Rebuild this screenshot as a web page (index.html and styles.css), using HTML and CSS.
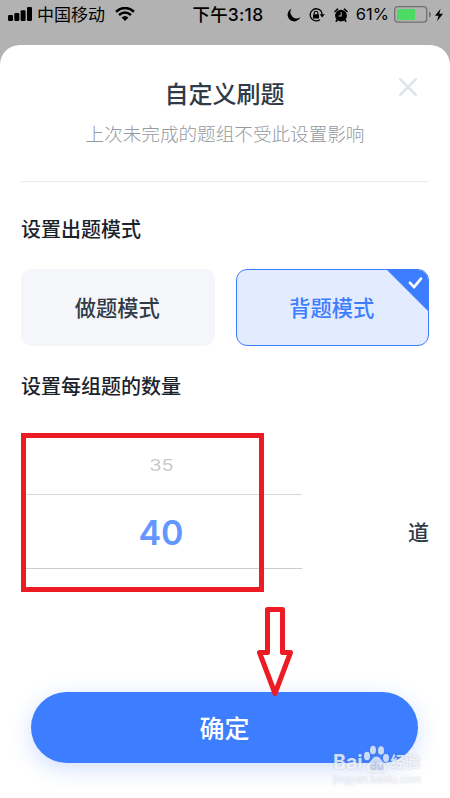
FILE: index.html
```
<!DOCTYPE html>
<html lang="zh-CN">
<head>
  <meta charset="UTF-8" />
  <meta name="viewport" content="width=device-width, initial-scale=1" />
  <title>自定义刷题</title>
  <link rel="stylesheet" href="styles.css">
</head>
<body>
  <!-- Status bar -->
  <header class="status-bar">
    <div class="status-left">
      <svg width="24" height="14" viewBox="0 0 24 14">
        <rect x="0" y="8" width="5" height="6" rx="1.2" />
        <rect x="6.3" y="6" width="5" height="8" rx="1.2" />
        <rect x="12.6" y="3.3" width="5" height="10.7" rx="1.2" />
        <rect x="19" y="0" width="5" height="14" rx="1.2" />
      </svg>
      <span class="carrier">中国移动</span>
      <svg class="wifi" width="20" height="14" viewBox="0 0 20 14">
        <path d="M1 4.7 Q10 -2.7 19 4.7 M4 8 Q10 2.9 16 8" fill="none" stroke="#000" stroke-width="2.5" />
        <path d="M6.5 10.5 Q10 7.5 13.5 10.5 L10 14 Z" />
      </svg>
    </div>
    <span class="clock">下午3:18</span>
    <div class="status-right">
      <svg width="14" height="14" viewBox="0 0 14 14">
        <path d="M4.4 .8 A6.6 6.6 0 1 0 13.3 9.3 A6.3 6.3 0 0 1 4.4 .8 Z" />
      </svg>
      <svg class="lock" width="16" height="14" viewBox="0 0 16 14">
        <path d="M12.2 3.2 A6.1 6.1 0 1 0 10.9 11.8 M11.4 2.4 A6.1 6.1 0 0 1 13.1 7" fill="none" stroke="#000" stroke-width="1.3" />
        <path d="M10.6 6.3 H15.8 L13.2 9.4 Z" />
        <rect x="4" y="6.2" width="6" height="4.4" rx=".6" />
        <path d="M5.2 6.5 V5 a1.8 1.8 0 0 1 3.6 0 V6.5" fill="none" stroke="#000" stroke-width="1.1" />
      </svg>
      <svg class="alarm" width="14" height="14" viewBox="0 0 14 14">
        <circle cx="7" cy="7.6" r="5.9" />
        <path d="M1 3.5 L3.6 1.2 M10.4 1.2 L13 3.5 M3.2 11.7 L2.2 13.2 M10.8 11.7 L11.8 13.2" stroke="#000" stroke-width="1.6" stroke-linecap="round" />
        <path d="M7.2 4.2 V8 H4.4" fill="none" stroke="#b2b2b2" stroke-width="1.1" />
      </svg>
      <span class="percent">61%</span>
      <svg class="battery" width="37" height="17" viewBox="0 0 37 17">
        <rect x=".7" y=".7" width="32" height="15.4" rx="3" fill="none" stroke="#707070" stroke-width="1.3" />
        <rect x="3" y="3" width="18" height="11" fill="#4cd964" />
        <path d="M35 5.5 q2 .8 2 3 t-2 3 Z" fill="#707070" />
      </svg>
      <svg class="bolt" width="8" height="14" viewBox="0 0 9 14">
        <path d="M6.3 0 L0 7.8 H4 L2.3 14 L9 5.6 H4.8 Z" />
      </svg>
    </div>
  </header>

  <main class="sheet">
    <svg class="close" width="18" height="18" viewBox="0 0 18 18">
      <path d="M1.2 1.2 L16.8 16.8 M16.8 1.2 L1.2 16.8" stroke="#e1e3eb" stroke-width="2.6" stroke-linecap="round" />
    </svg>
    <div class="heading">
      <h1>自定义刷题</h1>
      <p>上次未完成的题组不受此设置影响</p>
    </div>

    <h2>设置出题模式</h2>
    <div class="modes">
      <div class="mode">做题模式</div>
      <div class="mode active">
        背题模式
        <svg class="corner" width="43" height="43" viewBox="0 0 43 43">
          <path d="M0 0 H43 V43 Z" fill="#3d7dff" />
          <path d="M24 13.8 L28 18.2 L35 9.6" fill="none" stroke="#fff" stroke-width="2.7" stroke-linecap="round" stroke-linejoin="round" />
        </svg>
      </div>
    </div>

    <h2 class="count-title">设置每组题的数量</h2>
    <div class="count">
      <div class="picker">
        <div class="prev"><span>35</span></div>
        <div class="current">40</div>
      </div>
      <span class="unit">道</span>
      <div class="mark-box"></div>
    </div>

    <button class="confirm">确定</button>
  </main>

  <svg class="mark-arrow" width="38" height="92" viewBox="0 0 38 92">
    <path d="M11.5 2.5 H26.5 V45.5 H34.5 L19 86.5 L3.5 45.5 H11.5 Z" fill="none" stroke="#ed1c24" stroke-width="5" stroke-linejoin="round" />
  </svg>

  <!-- Watermark -->
  <div class="watermark">
    <div class="wm-logo">
      <span>Bai</span>
      <svg width="27" height="28" viewBox="0 0 27 28">
        <ellipse cx="4" cy="11" rx="3" ry="4.2" />
        <ellipse cx="10" cy="5" rx="3" ry="4.3" />
        <ellipse cx="18" cy="5.5" rx="3" ry="4.3" />
        <ellipse cx="23" cy="13" rx="3" ry="4" />
        <path d="M13.5 11.5 C17 11.5 18 15 21 18 C25 22 23 28 18 27.5 H9 C4 28 2 22 6 18 C9 15 10 11.5 13.5 11.5 Z" />
        <text x="7" y="25">du</text>
      </svg>
      <span class="wm-cn">经验</span>
    </div>
    <div class="wm-url">jingyan.baidu.com</div>
  </div>
</body>
</html>
```
FILE: styles.css
```
* {
  box-sizing: border-box;
}

body {
  margin: 0;
  height: 798px;
  overflow: hidden;
  position: relative;
  background: #b2b2b2;
  font-family: Inter, 'Noto Sans CJK SC', sans-serif;
  color: #303b47;
}

svg {
  display: block;
  flex: none;
}

.status-bar {
  height: 45px;
  padding: 0 7px 16px 8px;
  display: flex;
  align-items: center;
  justify-content: space-between;
  color: #000;
  font-size: 17px;
  line-height: 29px;
  white-space: nowrap;
}

.status-left,
.status-right {
  display: flex;
  align-items: center;
}

.status-left svg {
  margin-top: -1px;
}

.carrier {
  margin-left: 5px;
  padding-top: 1px;
}

.status-left .wifi {
  margin-left: 10px;
}

.clock {
  margin-left: 34px;
  font-size: 17.4px;
  font-weight: 500;
  letter-spacing: 0.3px;
}

.lock {
  margin-left: 8px;
}

.alarm {
  margin-left: 9px;
}

.percent {
  margin-left: 8px;
  font-size: 16.5px;
}

.battery {
  margin-left: 5px;
}

.bolt {
  margin-left: 4px;
}

.sheet {
  position: relative;
  height: 753px;
  padding: 0 21px;
  background: #fff;
  border-radius: 20px 20px 0 0;
}

.close {
  position: absolute;
  top: 33px;
  right: 33px;
}

.heading {
  height: 137px;
  padding-top: 32px;
  border-bottom: 1px solid #ebebeb;
  text-align: center;
}

h1 {
  margin: 0 1px 0 0;
  font-size: 24px;
  line-height: 36px;
  font-weight: 500;
}

.heading p {
  margin: 7px 0 0;
  font-size: 18.6px;
  line-height: 28px;
  font-weight: 300;
  color: #959aa1;
}

h2 {
  margin: 33px 0 0;
  font-size: 20px;
  line-height: 30px;
  font-weight: 500;
  color: #1a222b;
}

.modes {
  margin-top: 24px;
  display: grid;
  grid-template-columns: 1fr 1fr;
  gap: 21px;
}

.mode {
  position: relative;
  height: 77px;
  padding: 1px 1px 0 0;
  border-radius: 11px;
  background: #f5f6fa;
  font-size: 21.3px;
  line-height: 77px;
  font-weight: 500;
  text-align: center;
  overflow: hidden;
}

.mode.active {
  border: 1.5px solid #3d7dff;
  background: #e3ebff;
  color: #3d7dff;
  line-height: 75px;
}

.corner {
  position: absolute;
  top: -1px;
  right: -1px;
}

.count-title {
  margin-top: 26px;
}

.count {
  position: relative;
  height: 159px;
  margin-top: 31px;
  display: flex;
  justify-content: space-between;
}

.picker {
  width: 281px;
  text-align: center;
}

.prev {
  height: 62px;
  border-bottom: 1px solid #d9d9d9;
  font-size: 15.5px;
  line-height: 65px;
  color: #c8c8c8;
}

/* rows away from the centre look flattened by the wheel */
.prev span {
  display: inline-block;
  transform: scaleX(1.3);
}

.current {
  height: 74px;
  padding-right: 1px;
  border-bottom: 1px solid #cdcdcd;
  font-size: 34px;
  line-height: 75px;
  font-weight: 600;
  color: #6496ff;
}

.unit {
  margin-top: 84px;
  font-size: 21px;
  line-height: 32px;
  font-weight: 500;
}

.mark-box {
  position: absolute;
  top: 0;
  left: 0;
  width: 243px;
  height: 159px;
  border: 5px solid #ed1c24;
}

.confirm {
  display: block;
  width: 387px;
  height: 71px;
  margin: 100px 0 0 10px;
  padding: 0 0 1px;
  border: none;
  border-radius: 36px;
  background: #3d7dff;
  box-shadow: 0 6px 22px rgba(61, 125, 255, 0.24);
  color: #fff;
  font-family: inherit;
  font-size: 25px;
  font-weight: 500;
}

.mark-arrow {
  position: absolute;
  top: 607px;
  left: 256px;
}

.watermark {
  position: absolute;
  top: 744px;
  left: 333px;
  width: 90px;
  color: rgba(255, 255, 255, 0.75);
  text-shadow: 0 0 2px rgba(110, 120, 145, 0.4);
}

.wm-logo {
  display: flex;
  align-items: flex-end;
  height: 29px;
  font-size: 19.5px;
  line-height: 22px;
  font-weight: 700;
}

.wm-logo svg {
  fill: rgba(255, 255, 255, 0.72);
  filter: drop-shadow(0 0 1px rgba(110, 120, 145, 0.4));
}

.wm-logo text {
  fill: #bccaec;
  font-size: 11px;
  font-weight: 700;
}

.wm-cn {
  margin-left: 1px;
  font-size: 15px;
}

.wm-url {
  font-size: 10.2px;
  line-height: 13px;
}
```
